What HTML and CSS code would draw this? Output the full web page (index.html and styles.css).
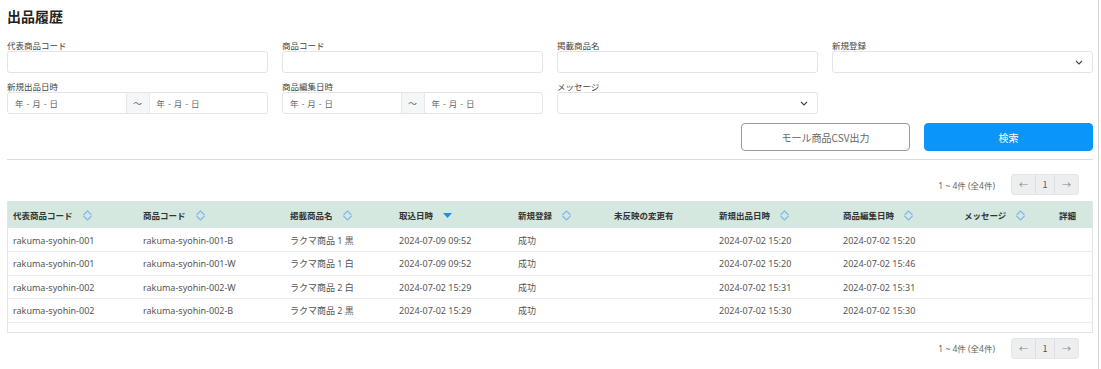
FILE: index.html
```html
<!DOCTYPE html>
<html lang="ja">
<head>
<meta charset="utf-8">
<link rel="stylesheet" href="styles.css">
</head>
<body>
<div class="page">
  <h1 class="title">出品履歴</h1>
  <div class="filters">
    <div class="field">
      <label class="label">代表商品コード</label>
      <div class="input"></div>
    </div>
    <div class="field">
      <label class="label">商品コード</label>
      <div class="input"></div>
    </div>
    <div class="field">
      <label class="label">掲載商品名</label>
      <div class="input"></div>
    </div>
    <div class="field">
      <label class="label">新規登録</label>
      <div class="input select"><svg class="chev" viewBox="0 0 8 5" width="8" height="5"><polyline points="1,1 4,4 7,1" fill="none" stroke="#444" stroke-width="1.1"/></svg></div>
    </div>
    <div class="field">
      <label class="label">新規出品日時</label>
      <div class="range">
        <div class="date">年 - 月 - 日</div>
        <div class="tilde">～</div>
        <div class="date">年 - 月 - 日</div>
      </div>
    </div>
    <div class="field">
      <label class="label">商品編集日時</label>
      <div class="range">
        <div class="date">年 - 月 - 日</div>
        <div class="tilde">～</div>
        <div class="date">年 - 月 - 日</div>
      </div>
    </div>
    <div class="field">
      <label class="label">メッセージ</label>
      <div class="input select"><svg class="chev" viewBox="0 0 8 5" width="8" height="5"><polyline points="1,1 4,4 7,1" fill="none" stroke="#444" stroke-width="1.1"/></svg></div>
    </div>
  </div>
  <div class="actions">
    <button class="btn btn-outline">モール商品CSV出力</button>
    <button class="btn btn-primary">検索</button>
  </div>
  <hr class="divider">
  <div class="pager">
    <span class="count">1 ~ 4件 (全4件)</span>
    <div class="pages"><span class="pg">←</span><span class="pg num">1</span><span class="pg">→</span></div>
  </div>
  <div class="table-wrap">
    <table class="grid">
      <colgroup>
        <col style="width:130px"><col style="width:147px"><col style="width:109px"><col style="width:119px"><col style="width:96px"><col style="width:105px"><col style="width:124px"><col style="width:121px"><col style="width:95px"><col>
      </colgroup>
      <thead>
        <tr>
          <th>代表商品コード<svg class="sort" viewBox="0 0 11 11" width="11" height="11"><polyline points="1.5,5 5.5,1 9.5,5" fill="none" stroke="#7db7ee" stroke-width="1.1"/><polyline points="1.5,6 5.5,10 9.5,6" fill="none" stroke="#7db7ee" stroke-width="1.1"/></svg></th>
          <th>商品コード<svg class="sort" viewBox="0 0 11 11" width="11" height="11"><polyline points="1.5,5 5.5,1 9.5,5" fill="none" stroke="#7db7ee" stroke-width="1.1"/><polyline points="1.5,6 5.5,10 9.5,6" fill="none" stroke="#7db7ee" stroke-width="1.1"/></svg></th>
          <th>掲載商品名<svg class="sort" viewBox="0 0 11 11" width="11" height="11"><polyline points="1.5,5 5.5,1 9.5,5" fill="none" stroke="#7db7ee" stroke-width="1.1"/><polyline points="1.5,6 5.5,10 9.5,6" fill="none" stroke="#7db7ee" stroke-width="1.1"/></svg></th>
          <th>取込日時<svg class="sort" viewBox="0 0 11 11" width="11" height="11"><polygon points="1,3 10,3 5.5,8" fill="#1a8fee"/></svg></th>
          <th>新規登録<svg class="sort" viewBox="0 0 11 11" width="11" height="11"><polyline points="1.5,5 5.5,1 9.5,5" fill="none" stroke="#7db7ee" stroke-width="1.1"/><polyline points="1.5,6 5.5,10 9.5,6" fill="none" stroke="#7db7ee" stroke-width="1.1"/></svg></th>
          <th>未反映の変更有</th>
          <th>新規出品日時<svg class="sort" viewBox="0 0 11 11" width="11" height="11"><polyline points="1.5,5 5.5,1 9.5,5" fill="none" stroke="#7db7ee" stroke-width="1.1"/><polyline points="1.5,6 5.5,10 9.5,6" fill="none" stroke="#7db7ee" stroke-width="1.1"/></svg></th>
          <th>商品編集日時<svg class="sort" viewBox="0 0 11 11" width="11" height="11"><polyline points="1.5,5 5.5,1 9.5,5" fill="none" stroke="#7db7ee" stroke-width="1.1"/><polyline points="1.5,6 5.5,10 9.5,6" fill="none" stroke="#7db7ee" stroke-width="1.1"/></svg></th>
          <th>メッセージ<svg class="sort" viewBox="0 0 11 11" width="11" height="11"><polyline points="1.5,5 5.5,1 9.5,5" fill="none" stroke="#7db7ee" stroke-width="1.1"/><polyline points="1.5,6 5.5,10 9.5,6" fill="none" stroke="#7db7ee" stroke-width="1.1"/></svg></th>
          <th>詳細</th>
        </tr>
      </thead>
      <tbody>
        <tr><td>rakuma-syohin-001</td><td>rakuma-syohin-001-B</td><td>ラクマ商品 1 黒</td><td>2024-07-09 09:52</td><td>成功</td><td></td><td>2024-07-02 15:20</td><td>2024-07-02 15:20</td><td></td><td></td></tr>
        <tr><td>rakuma-syohin-001</td><td>rakuma-syohin-001-W</td><td>ラクマ商品 1 白</td><td>2024-07-09 09:52</td><td>成功</td><td></td><td>2024-07-02 15:20</td><td>2024-07-02 15:46</td><td></td><td></td></tr>
        <tr><td>rakuma-syohin-002</td><td>rakuma-syohin-002-W</td><td>ラクマ商品 2 白</td><td>2024-07-02 15:29</td><td>成功</td><td></td><td>2024-07-02 15:31</td><td>2024-07-02 15:31</td><td></td><td></td></tr>
        <tr><td>rakuma-syohin-002</td><td>rakuma-syohin-002-B</td><td>ラクマ商品 2 黒</td><td>2024-07-02 15:29</td><td>成功</td><td></td><td>2024-07-02 15:30</td><td>2024-07-02 15:30</td><td></td><td></td></tr>
      </tbody>
    </table>
    <div class="table-foot"></div>
  </div>
  <div class="pager pager-bottom">
    <span class="count">1 ~ 4件 (全4件)</span>
    <div class="pages"><span class="pg">←</span><span class="pg num">1</span><span class="pg">→</span></div>
  </div>
</div>
</body>
</html>
```

FILE: styles.css
```css
* { box-sizing: border-box; }
html, body { margin: 0; padding: 0; background: #fff; }
body {
  font-family: "Noto Sans CJK JP", "Noto Sans", sans-serif;
  color: #333;
  font-size: 9px;
}
.page {
  width: 1099px;
  min-height: 369px;
  padding: 6px 5px 0 7px;
  border-right: 1px solid #d4d4d4;
}
.title {
  margin: 0 0 13px 0;
  font-size: 14px;
  line-height: 20px;
  font-weight: 700;
  color: #222;
}
.filters {
  display: grid;
  grid-template-columns: repeat(4, 261px);
  column-gap: 14px;
  row-gap: 7px;
}
.field { display: flex; flex-direction: column; }
.label {
  font-size: 8.5px;
  line-height: 12px;
  color: #444;
}
.input {
  height: 22px;
  border: 1px solid #e2e4e7;
  border-radius: 3px;
  background: #fff;
}
.select {
  display: flex;
  align-items: center;
  justify-content: flex-end;
  padding-right: 9px;
}
.chev { display: block; }
.range {
  display: flex;
  height: 22px;
  border: 1px solid #e2e4e7;
  border-radius: 3px;
  overflow: hidden;
}
.date {
  flex: 1;
  display: flex;
  align-items: center;
  padding-left: 7px;
  color: #666;
  font-size: 8.5px;
  word-spacing: 1px;
}
.tilde {
  width: 24px;
  display: flex;
  align-items: center;
  justify-content: center;
  background: #f4f6f8;
  border-left: 1px solid #e6e8eb;
  border-right: 1px solid #e6e8eb;
  color: #666;
  font-size: 9px;
}
.actions {
  display: flex;
  justify-content: flex-end;
  gap: 14px;
  margin-top: 9px;
}
.btn {
  width: 169px;
  height: 28px;
  border-radius: 4px;
  font-family: inherit;
  font-size: 10px;
  cursor: pointer;
}
.btn-outline {
  background: #fff;
  border: 1px solid #9a9a9a;
  color: #666;
}
.btn-primary {
  background: #0a95fb;
  border: 1px solid #0a95fb;
  color: #fff;
}
.divider {
  margin: 8px 0 0 0;
  border: 0;
  border-top: 1px solid #dcdcdc;
  height: 0;
}
.pager {
  display: flex;
  justify-content: flex-end;
  align-items: center;
  gap: 16px;
  padding-right: 14px;
  margin-top: 14px;
  height: 21px;
}
.pager-bottom { margin-top: 5px; }
.count {
  font-family: "Noto Sans", "Noto Sans CJK JP", sans-serif;
  font-size: 8.5px;
  color: #666;
}
.pages {
  display: flex;
  height: 21px;
  background: #eceef0;
  border: 1px solid #e4e6e9;
  border-radius: 3px;
}
.pg {
  width: 23px;
  display: flex;
  align-items: center;
  justify-content: center;
  color: #888;
  font-size: 9px;
}
.pg.num {
  width: 20px;
  border-left: 1px solid #dcdfe2;
  border-right: 1px solid #dcdfe2;
  color: #555;
}
.table-wrap {
  margin-top: 6px;
  border: 1px solid #e4e4e4;
  border-top: 0;
}
.grid {
  width: 100%;
  border-collapse: collapse;
  table-layout: fixed;
}
.grid th {
  background: #d4e8df;
  height: 27px;
  padding: 0 0 0 5px;
  text-align: left;
  font-weight: 700;
  font-size: 8.5px;
  color: #333;
  white-space: nowrap;
}
.sort {
  vertical-align: -2px;
  margin-left: 9px;
}
.grid td {
  height: 23.5px;
  padding: 1px 0 0 5px;
  border-bottom: 1px solid #ececec;
  font-family: "Noto Sans", "Noto Sans CJK JP", sans-serif;
  color: #555;
  font-size: 9px;
  white-space: nowrap;
}
.table-foot { height: 9px; }
```
